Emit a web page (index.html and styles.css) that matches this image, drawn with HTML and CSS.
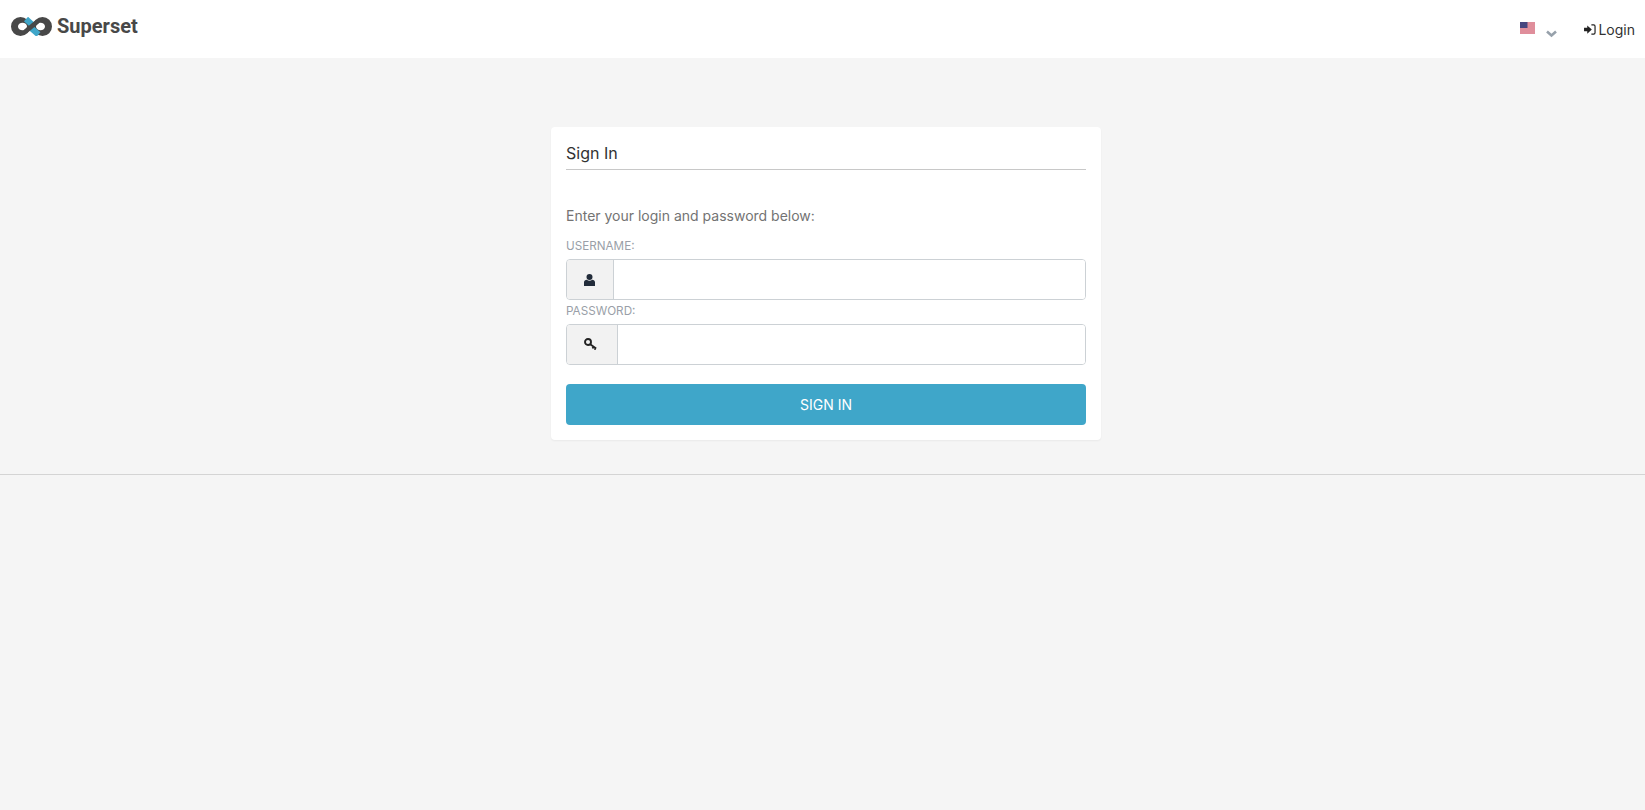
FILE: index.html
```html
<!DOCTYPE html>
<html lang="en">
  <head>
    <meta charset="UTF-8" />
    <title>Superset</title>
    <link rel="stylesheet" href="styles.css">
  </head>
  <body>
    <nav class="navbar">
      <a class="brand" href="#">
        <svg class="brand-logo" viewBox="0 0 41 19" width="41" height="19">
          <path fill-rule="evenodd" fill="#484848" d="M9.500 0a9.500 9.500 0 0 1 0 19a9.500 9.500 0 0 1 0-19zM7 9.500a4.500 3.800 0 0 0 9 0a4.500 3.800 0 0 0-9 0zM31.500 0a9.500 9.500 0 0 1 0 19a9.500 9.500 0 0 1 0-19zM25 9.500a4.500 3.800 0 0 0 9 0a4.500 3.800 0 0 0-9 0z" />
          <path d="M15 2L21.500 8M20 11l7.500 6.500" fill="none" stroke="#3fa6c9" stroke-width="6" />
          <path d="M14.500 14.500L26.500 4.500" fill="none" stroke="#484848" stroke-width="4.600" />
        </svg>
        <span class="brand-name">Superset</span>
      </a>
      <div class="nav-right">
        <a class="lang" href="#">
          <svg class="flag" viewBox="0 0 15 12" width="15" height="12">
            <rect width="15" height="12" fill="#ececec" />
            <path d="M0 1h15M0 3h15M0 5h15M0 7h15M0 9h15M0 11h15" stroke="#d3304a" stroke-width="1" />
            <rect width="7.500" height="6" fill="#46467f" />
          </svg>
          <svg class="caret" viewBox="0 0 11 8" width="11" height="8">
            <path d="M1 1.500l4.500 4 4.500-4" fill="none" stroke="#97a1ab" stroke-width="2.600" />
          </svg>
        </a>
        <a class="login" href="#">
          <svg class="login-icon" viewBox="0 0 13 12" width="12" height="11">
            <path d="M0 4.200h3.500V1.500L8.500 6l-5 4.500V7.800H0z" fill="#222" />
            <path d="M8 1h2.500A1.500 1.500 0 0 1 12 2.500v7a1.500 1.500 0 0 1-1.500 1.500H8" fill="none" stroke="#222" stroke-width="1.300" />
          </svg>
          Login
        </a>
      </div>
    </nav>

    <main class="content">
      <div class="card">
        <h4 class="card-title">Sign In</h4>
        <p class="card-intro">Enter your login and password below:</p>
        <form>
          <label class="field-label" for="username">USERNAME:</label>
          <div class="input-group">
            <span class="addon addon-user">
              <svg viewBox="0 0 11 12" width="11" height="12">
                <circle cx="5.500" cy="3" r="3" fill="#222c3a" />
                <path d="M0 12V8.500C0 6.800 1.300 5.800 2.800 5.800c.7.600 1.700.9 2.700.9s2-.3 2.700-.9C9.700 5.800 11 6.800 11 8.500V12z" fill="#222c3a" />
              </svg>
            </span>
            <input class="input" type="text" id="username" />
          </div>
          <label class="field-label" for="password">PASSWORD:</label>
          <div class="input-group">
            <span class="addon addon-key">
              <svg viewBox="0 0 13 12" width="13" height="12">
                <circle cx="4" cy="4" r="3" fill="none" stroke="#222" stroke-width="1.900" />
                <path d="M6.200 6.200l6 4.300M9.500 8.500l-1 2M11.500 10l-.8 1.800" fill="none" stroke="#222" stroke-width="1.700" />
              </svg>
            </span>
            <input class="input" type="password" id="password" />
          </div>
          <button class="submit" type="button">SIGN IN</button>
        </form>
      </div>
    </main>
    <hr class="footer-line" />
  </body>
</html>
```

FILE: styles.css
```css
body {
  margin: 0;
  background-color: #f5f5f5;
  font-family: Inter, "Liberation Sans", sans-serif;
  color: #323232;
}
a {
  color: inherit;
  text-decoration: none;
}
.navbar {
  display: flex;
  justify-content: space-between;
  align-items: center;
  height: 58px;
  padding: 0 10px 0 11px;
  background-color: white;
}
.brand {
  display: flex;
  align-items: center;
  gap: 5px;
  margin-top: -6px;
}
.brand-name {
  font-family: Roboto, sans-serif;
  font-weight: 700;
  font-size: 20px;
  color: #484848;
}
.nav-right {
  display: flex;
  align-items: center;
  gap: 27px;
}
.lang {
  display: flex;
  align-items: flex-start;
  gap: 11px;
  margin-top: 1px;
}
.caret {
  margin-top: 8px;
}
.login {
  display: flex;
  align-items: center;
  gap: 2px;
  font-size: 14px;
  color: #323232;
}
.content {
  display: flex;
  justify-content: center;
  padding-top: 69px;
  padding-left: 7px;
}
.card {
  box-sizing: border-box;
  width: 550px;
  height: 313px;
  padding: 15px;
  background-color: white;
  border-radius: 4px;
  box-shadow: 0 1px 2px rgba(0, 0, 0, 0.05);
}
.card-title {
  margin: 0;
  height: 25px;
  padding-top: 2px;
  border-bottom: 1px solid #c8c8c8;
  font-size: 16px;
  font-weight: 400;
  line-height: 19px;
  color: #323232;
}
.card-intro {
  margin: 37px 0 0;
  font-size: 14px;
  line-height: 17px;
  color: #737373;
}
.field-label {
  display: block;
  font-size: 11.700px;
  line-height: 18px;
  color: #9a9fa8;
}
.card-intro + form .field-label:first-child {
  margin-top: 13px;
}
.input-group {
  display: flex;
  height: 41px;
  margin-top: 4px;
  margin-bottom: 2px;
  box-sizing: border-box;
  border: 1px solid #ccd1d5;
  border-radius: 4px;
  overflow: hidden;
}
.addon {
  display: flex;
  align-items: center;
  justify-content: center;
  flex: none;
  box-sizing: border-box;
  background-color: #f2f2f2;
  border-right: 1px solid #ccd1d5;
}
.addon-user {
  width: 47px;
  padding-right: 1px;
}
.addon-key {
  width: 51px;
  padding: 0 3px 2px 0;
}
.input {
  flex: 1;
  min-width: 0;
  border: none;
  outline: none;
  background-color: white;
}
.submit {
  display: block;
  width: 100%;
  height: 41px;
  margin-top: 19px;
  background-color: #3fa6c9;
  border: none;
  border-radius: 4px;
  color: white;
  font-family: inherit;
  font-size: 14px;
  cursor: pointer;
}
.footer-line {
  margin: 34px 0 0;
  border: none;
  border-top: 1px solid #d4d4d4;
}
```
